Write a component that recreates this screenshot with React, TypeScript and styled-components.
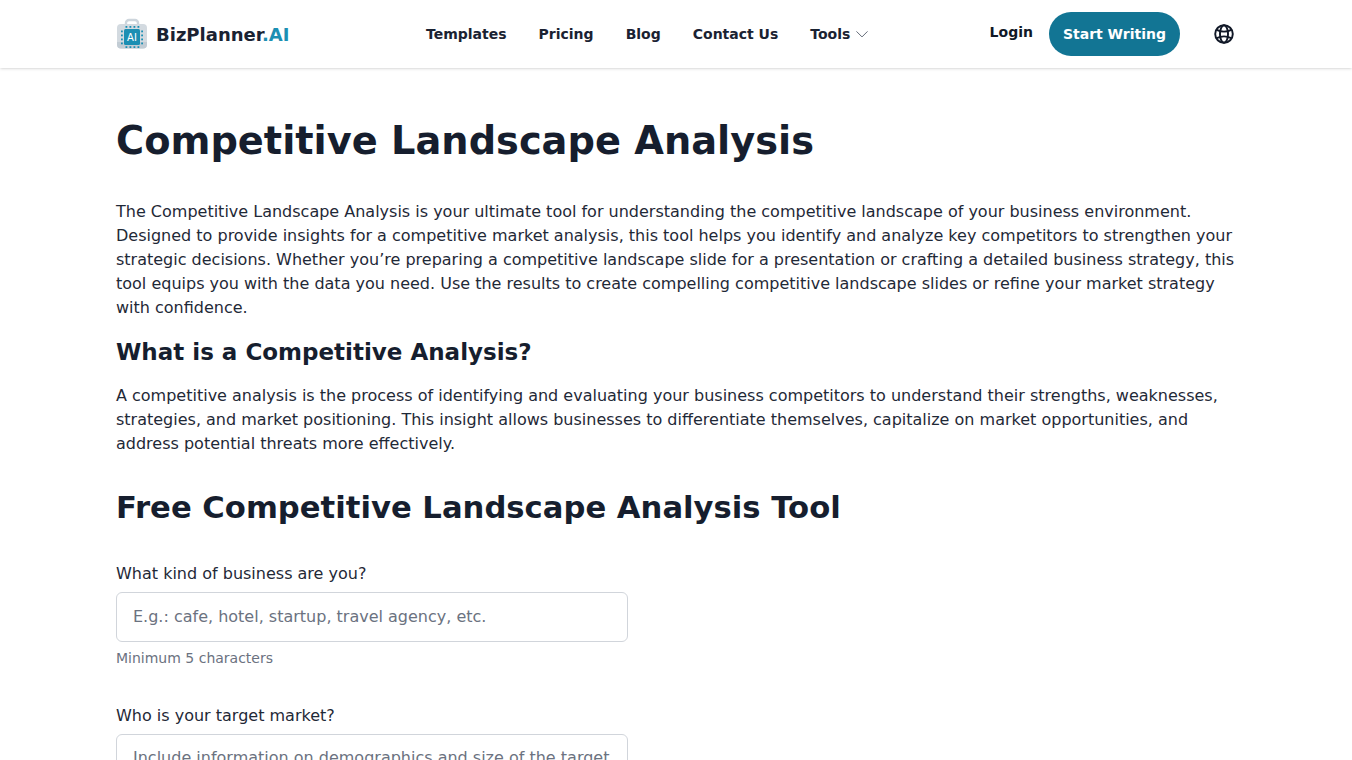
import React from 'react'
import styled, { createGlobalStyle } from 'styled-components'

const GlobalStyle = createGlobalStyle`
    html, body {
        margin: 0;
        padding: 0;
        height: 100%;
        overflow: hidden;
        background: #fff;
    }
    * {
        box-sizing: border-box;
    }
    body {
        font-family: "DejaVu Sans", sans-serif;
        color: #161e2e;
    }
`

const pinOffsets = [0, 4, 8, 12]

const LogoIcon = () => (
    <svg width="32" height="32" viewBox="0 0 32 32" fill="none">
        <path d="M10 7V5a3 3 0 0 1 3-3h6a3 3 0 0 1 3 3v2" stroke="#cdd5dc" strokeWidth="2.4" />
        <rect x="1" y="6" width="30" height="24.5" rx="4" fill="#d3dae0" />
        <path d="M1 24h30v2.5a4 4 0 0 1-4 4H5a4 4 0 0 1-4-4z" fill="#c2ccd4" />
        <rect x="8" y="11" width="16" height="16" rx="1.5" fill="#1b8fb3" />
        <g fill="#1b8fb3">
            {pinOffsets.map((o) => (
                <React.Fragment key={o}>
                    <rect x={9.5 + o} y="8" width="1.8" height="1.8" />
                    <rect x={9.5 + o} y="28.2" width="1.8" height="1.8" />
                    <rect x="5" y={12.5 + o} width="1.8" height="1.8" />
                    <rect x="25.2" y={12.5 + o} width="1.8" height="1.8" />
                </React.Fragment>
            ))}
        </g>
        <text x="16" y="23" textAnchor="middle" fontFamily="DejaVu Sans, sans-serif" fontSize="10" fill="#fff">AI</text>
    </svg>
)

const App: React.FC = () => {
    return (
        <>
            <GlobalStyle />
            <Header>
                <HeaderInner>
                    <Logo href="#">
                        <LogoIcon />
                        <LogoText>BizPlanner<LogoAccent>.AI</LogoAccent></LogoText>
                    </Logo>
                    <Nav>
                        <NavLink href="#">Templates</NavLink>
                        <NavLink href="#">Pricing</NavLink>
                        <NavLink href="#">Blog</NavLink>
                        <NavLink href="#">Contact Us</NavLink>
                        <NavLink href="#">
                            Tools
                            <svg width="14" height="14" viewBox="0 0 24 24" fill="none" stroke="#4b5563" strokeWidth="1.5">
                                <path d="M3 8l9 9 9-9" strokeLinecap="round" strokeLinejoin="round" />
                            </svg>
                        </NavLink>
                    </Nav>
                    <Actions>
                        <LoginLink href="#">Login</LoginLink>
                        <StartButton href="#">Start Writing</StartButton>
                        <GlobeButton>
                            <svg width="22" height="22" viewBox="0 0 24 24" fill="none" stroke="#111827" strokeWidth="2.1">
                                <circle cx="12" cy="12" r="9.6" />
                                <ellipse cx="12" cy="12" rx="4.4" ry="9.6" />
                                <path d="M4 7.5c5 2.4 11 2.4 16 0M4 16.5c5-2.4 11-2.4 16 0" />
                            </svg>
                        </GlobeButton>
                    </Actions>
                </HeaderInner>
            </Header>
            <Main>
                <Title>Competitive Landscape Analysis</Title>
                <Paragraph>
                    The Competitive Landscape Analysis is your ultimate tool for understanding the competitive landscape of your business environment. Designed to provide insights for a competitive market analysis, this tool helps you identify and analyze key competitors to strengthen your strategic decisions. Whether you’re preparing a competitive landscape slide for a presentation or crafting a detailed business strategy, this tool equips you with the data you need. Use the results to create compelling competitive landscape slides or refine your market strategy with confidence.
                </Paragraph>
                <SubHeading>What is a Competitive Analysis?</SubHeading>
                <Paragraph>
                    A competitive analysis is the process of identifying and evaluating your business competitors to understand their strengths, weaknesses, strategies, and market positioning. This insight allows businesses to differentiate themselves, capitalize on market opportunities, and address potential threats more effectively.
                </Paragraph>
                <ToolHeading>Free Competitive Landscape Analysis Tool</ToolHeading>
                <Form>
                    <Field>
                        <Label>What kind of business are you?</Label>
                        <Input placeholder="E.g.: cafe, hotel, startup, travel agency, etc." />
                        <Hint>Minimum 5 characters</Hint>
                    </Field>
                    <Field>
                        <Label>Who is your target market?</Label>
                        <TextArea placeholder="Include information on demographics and size of the target" />
                    </Field>
                </Form>
            </Main>
        </>
    )
}

export default App

const Header = styled.header`
    height: 68px;
    background: #fff;
    box-shadow: 0 1px 3px 0 rgba(0, 0, 0, .12), 0 1px 2px -1px rgba(0, 0, 0, .1);
`

const HeaderInner = styled.div`
    width: 1120px;
    height: 100%;
    margin: 0 auto;
    display: flex;
    align-items: center;
`

const Logo = styled.a`
    display: flex;
    align-items: center;
    gap: 8px;
    width: 310px;
    text-decoration: none;
`

const LogoText = styled.span`
    font-size: 18px;
    font-weight: 700;
    color: #1a2232;
`

const LogoAccent = styled.span`
    color: #1b8fb3;
`

const Nav = styled.nav`
    display: flex;
    align-items: center;
    gap: 32px;
`

const NavLink = styled.a`
    display: flex;
    align-items: center;
    gap: 5px;
    font-size: 14px;
    font-weight: 700;
    color: #1a2232;
    text-decoration: none;
`

const Actions = styled.div`
    display: flex;
    align-items: center;
    margin-left: auto;
`

const LoginLink = styled.a`
    font-size: 14px;
    font-weight: 700;
    color: #111827;
    text-decoration: none;
    margin-right: 16px;
    padding-bottom: 4px;
`

const StartButton = styled.a`
    height: 44px;
    padding: 0 14px;
    border-radius: 22px;
    background: #127594;
    color: #fff;
    font-size: 14px;
    font-weight: 700;
    display: flex;
    align-items: center;
    text-decoration: none;
`

const GlobeButton = styled.div`
    display: flex;
    margin-left: 33px;
    margin-right: 1px;
`

const Main = styled.main`
    width: 1120px;
    margin: 0 auto;
    padding-top: 49px;
`

const Title = styled.h1`
    margin: 0 0 35px;
    font-size: 38.35px;
    line-height: 48px;
    font-weight: 700;
    color: #161e2e;
`

const Paragraph = styled.p`
    margin: 0;
    font-size: 16px;
    line-height: 24px;
    color: #1f2937;
`

const SubHeading = styled.h2`
    margin: 16px 0 16px;
    font-size: 23px;
    line-height: 32px;
    font-weight: 700;
    color: #161e2e;
`

const ToolHeading = styled.h2`
    margin: 32px 0 0;
    font-size: 30.67px;
    line-height: 40px;
    font-weight: 700;
    color: #161e2e;
`

const Form = styled.form`
    margin-top: 34px;
    width: 512px;
    display: flex;
    flex-direction: column;
    gap: 36px;
`

const Field = styled.div`
    display: flex;
    flex-direction: column;
`

const Label = styled.label`
    font-size: 16px;
    line-height: 24px;
    color: #1f2937;
    margin-bottom: 6px;
`

const Input = styled.input`
    height: 50px;
    width: 100%;
    padding: 0 16px 2px;
    border: 1px solid #d1d5db;
    border-radius: 6px;
    background: #fff;
    font-family: inherit;
    font-size: 16px;
    color: #111827;

    &::placeholder {
        color: #6b7280;
        opacity: 1;
    }
`

const TextArea = styled.textarea`
    height: 100px;
    width: 100%;
    padding: 11px 16px;
    border: 1px solid #d1d5db;
    border-radius: 6px;
    background: #fff;
    font-family: inherit;
    font-size: 16px;
    line-height: 24px;
    color: #111827;
    resize: none;

    &::placeholder {
        color: #6b7280;
        opacity: 1;
    }
`

const Hint = styled.span`
    margin-top: 6px;
    font-size: 14px;
    line-height: 20px;
    color: #6b7280;
`
